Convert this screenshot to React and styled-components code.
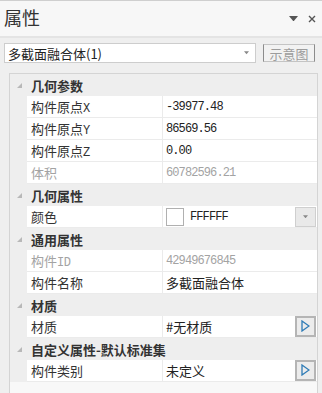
import styled, { createGlobalStyle } from 'styled-components';

const GlobalStyle = createGlobalStyle`
    html, body {
        margin: 0;
        padding: 0;
        background: #efefef;
        font-family: "Noto Sans CJK SC", "Noto Sans", sans-serif;
    }
`;

const Panel = styled.div`
    width: 322px;
    height: 393px;
    overflow: hidden;
    background: #efefef;
    display: flex;
    flex-direction: column;
`;

const TitleBar = styled.div`
    height: 35px;
    display: flex;
    align-items: center;
    padding: 0 6px 0 4px;
    border-top: 1px solid #cfcfcf;
    background: #f7f7f7;
    border-bottom: 2px solid #e4e4e4;
`;

const Title = styled.div`
    flex: 1;
    font-size: 18px;
    color: #333;
    line-height: 1;
    margin-top: -4px;
`;

const TitleTools = styled.div`
    display: flex;
    align-items: center;
    gap: 10px;
    color: #555;
`;

const Toolbar = styled.div`
    display: flex;
    align-items: flex-start;
    padding: 5px 0 0 4px;
    height: 35px;
    box-sizing: border-box;
`;

const Combo = styled.div`
    width: 252px;
    height: 20px;
    box-sizing: border-box;
    border: 1px solid #cdcdcd;
    background: #fff;
    display: flex;
    align-items: center;
    padding: 0 6px 0 3px;
    font-size: 13px;
    color: #222;
`;

const ComboText = styled.span`
    flex: 1;
    white-space: nowrap;
`;

const ShowButton = styled.div`
    margin-left: 7px;
    margin-top: 1px;
    width: 52px;
    height: 18px;
    box-sizing: border-box;
    border: 1px solid #c4c4c4;
    border-left-color: #8c8c8c;
    border-right-color: #8c8c8c;
    background: #f2f2f2;
    display: flex;
    align-items: center;
    justify-content: center;
    font-size: 13px;
    color: #9c9c9c;
`;

const Grid = styled.div`
    margin-left: 9px;
    width: 309px;
    flex: 1;
    box-sizing: border-box;
    border: 1px solid #d4d4d4;
    border-bottom: none;
    background: #f8f8f8;
`;

const CategoryRow = styled.div`
    display: grid;
    grid-template-columns: 17px 1fr;
    height: 22px;
    align-items: center;
    background: #eeeeee;
    font-size: 13px;
    font-weight: 700;
    color: #333;
`;

const Marker = styled.div`
    display: flex;
    justify-content: center;
    align-items: center;
    padding-left: 2px;
`;

const CategoryText = styled.div`
    padding-left: 4px;
    white-space: nowrap;
    overflow: hidden;
`;

const PropRow = styled.div`
    display: grid;
    grid-template-columns: 17px 136px 1fr;
    height: 22px;
    background: #eeeeee;
`;

const NameCell = styled.div`
    background: #fff;
    border-bottom: 1px solid #ebebeb;
    border-right: 1px solid #ebebeb;
    display: flex;
    align-items: center;
    padding-left: 4px;
    font-size: 13px;
    color: ${(p) => (p.disabled ? '#a3a3a3' : '#333')};
    white-space: nowrap;
`;

const ValueCell = styled.div`
    background: #fff;
    border-bottom: 1px solid #ebebeb;
    display: flex;
    align-items: center;
    padding-left: 3px;
    padding-right: 1px;
    font-size: 13px;
    color: ${(p) => (p.disabled ? '#a3a3a3' : '#222')};
    white-space: nowrap;
`;

const ValueText = styled.span`
    flex: 1;
    font-family: ${(p) =>
        p.mono
            ? '"Liberation Mono", "Noto Sans CJK SC", monospace'
            : '"Noto Sans CJK SC", sans-serif'};
    font-size: ${(p) => (p.mono ? '12px' : '13px')};
    letter-spacing: ${(p) => (p.mono ? '-0.9px' : '0')};
`;

const Mono = styled.span`
    font-family: "Liberation Mono", monospace;
    font-size: 12px;
    letter-spacing: -0.5px;
`;

const Swatch = styled.span`
    width: 16px;
    height: 16px;
    border: 1px solid #b0b0b0;
    background: #fff;
    margin-right: 6px;
    margin-left: 0;
`;

const DropButton = styled.div`
    width: 21px;
    height: 20px;
    box-sizing: border-box;
    border: 1px solid #cfcfcf;
    background: #e9e9e9;
    display: flex;
    align-items: center;
    justify-content: center;
`;

const ArrowButton = styled.div`
    width: 21px;
    height: 21px;
    box-sizing: border-box;
    border: 2px solid #b5b5b5;
    background: #ececec;
    display: flex;
    align-items: center;
    justify-content: center;
    margin-top: -1px;
`;

function Triangle() {
    return (
        <svg width="5" height="5" viewBox="0 0 5 5">
            <polygon points="0,5 5,5 5,0" fill="#b8b8b8" />
        </svg>
    );
}

function Category({ title }) {
    return (
        <CategoryRow>
            <Marker>
                <Triangle />
            </Marker>
            <CategoryText>{title}</CategoryText>
        </CategoryRow>
    );
}

function Prop({ name, children, disabled }) {
    return (
        <PropRow>
            <div />
            <NameCell disabled={disabled}>{name}</NameCell>
            <ValueCell disabled={disabled}>{children}</ValueCell>
        </PropRow>
    );
}

function PlayIcon() {
    return (
        <svg width="9" height="12" viewBox="0 0 9 12">
            <polygon
                points="1,1 8,6 1,11"
                fill="none"
                stroke="#2d7bb6"
                strokeWidth="1.3"
            />
        </svg>
    );
}

function SmallDown({ color = '#777', w = 5 }) {
    return (
        <svg width={w} height={w / 2 + 1} viewBox="0 0 10 6">
            <polygon points="0,0 10,0 5,6" fill={color} />
        </svg>
    );
}

export default function App() {
    return (
        <>
            <GlobalStyle />
            <Panel>
                <TitleBar>
                    <Title>属性</Title>
                    <TitleTools>
                        <SmallDown color="#555" w={9} />
                        <svg width="8" height="8" viewBox="0 0 8 8">
                            <path
                                d="M1 1 L7 7 M7 1 L1 7"
                                stroke="#555"
                                strokeWidth="1.4"
                            />
                        </svg>
                    </TitleTools>
                </TitleBar>
                <Toolbar>
                    <Combo>
                        <ComboText>多截面融合体(1)</ComboText>
                        <SmallDown color="#888" w={5} />
                    </Combo>
                    <ShowButton>示意图</ShowButton>
                </Toolbar>
                <Grid>
                    <Category title="几何参数" />
                    <Prop name={<span>构件原点<Mono>X</Mono></span>}>
                        <ValueText mono>-39977.48</ValueText>
                    </Prop>
                    <Prop name={<span>构件原点<Mono>Y</Mono></span>}>
                        <ValueText mono>86569.56</ValueText>
                    </Prop>
                    <Prop name={<span>构件原点<Mono>Z</Mono></span>}>
                        <ValueText mono>0.00</ValueText>
                    </Prop>
                    <Prop name="体积" disabled>
                        <ValueText mono>60782596.21</ValueText>
                    </Prop>
                    <Category title="几何属性" />
                    <Prop name="颜色">
                        <Swatch />
                        <ValueText mono>FFFFFF</ValueText>
                        <DropButton>
                            <SmallDown color="#888" w={5} />
                        </DropButton>
                    </Prop>
                    <Category title="通用属性" />
                    <Prop name={<span>构件<Mono>ID</Mono></span>} disabled>
                        <ValueText mono>42949676845</ValueText>
                    </Prop>
                    <Prop name="构件名称">
                        <ValueText>多截面融合体</ValueText>
                    </Prop>
                    <Category title="材质" />
                    <Prop name="材质">
                        <ValueText>#无材质</ValueText>
                        <ArrowButton>
                            <PlayIcon />
                        </ArrowButton>
                    </Prop>
                    <Category title="自定义属性-默认标准集" />
                    <Prop name="构件类别">
                        <ValueText>未定义</ValueText>
                        <ArrowButton>
                            <PlayIcon />
                        </ArrowButton>
                    </Prop>
                </Grid>
            </Panel>
        </>
    );
}
